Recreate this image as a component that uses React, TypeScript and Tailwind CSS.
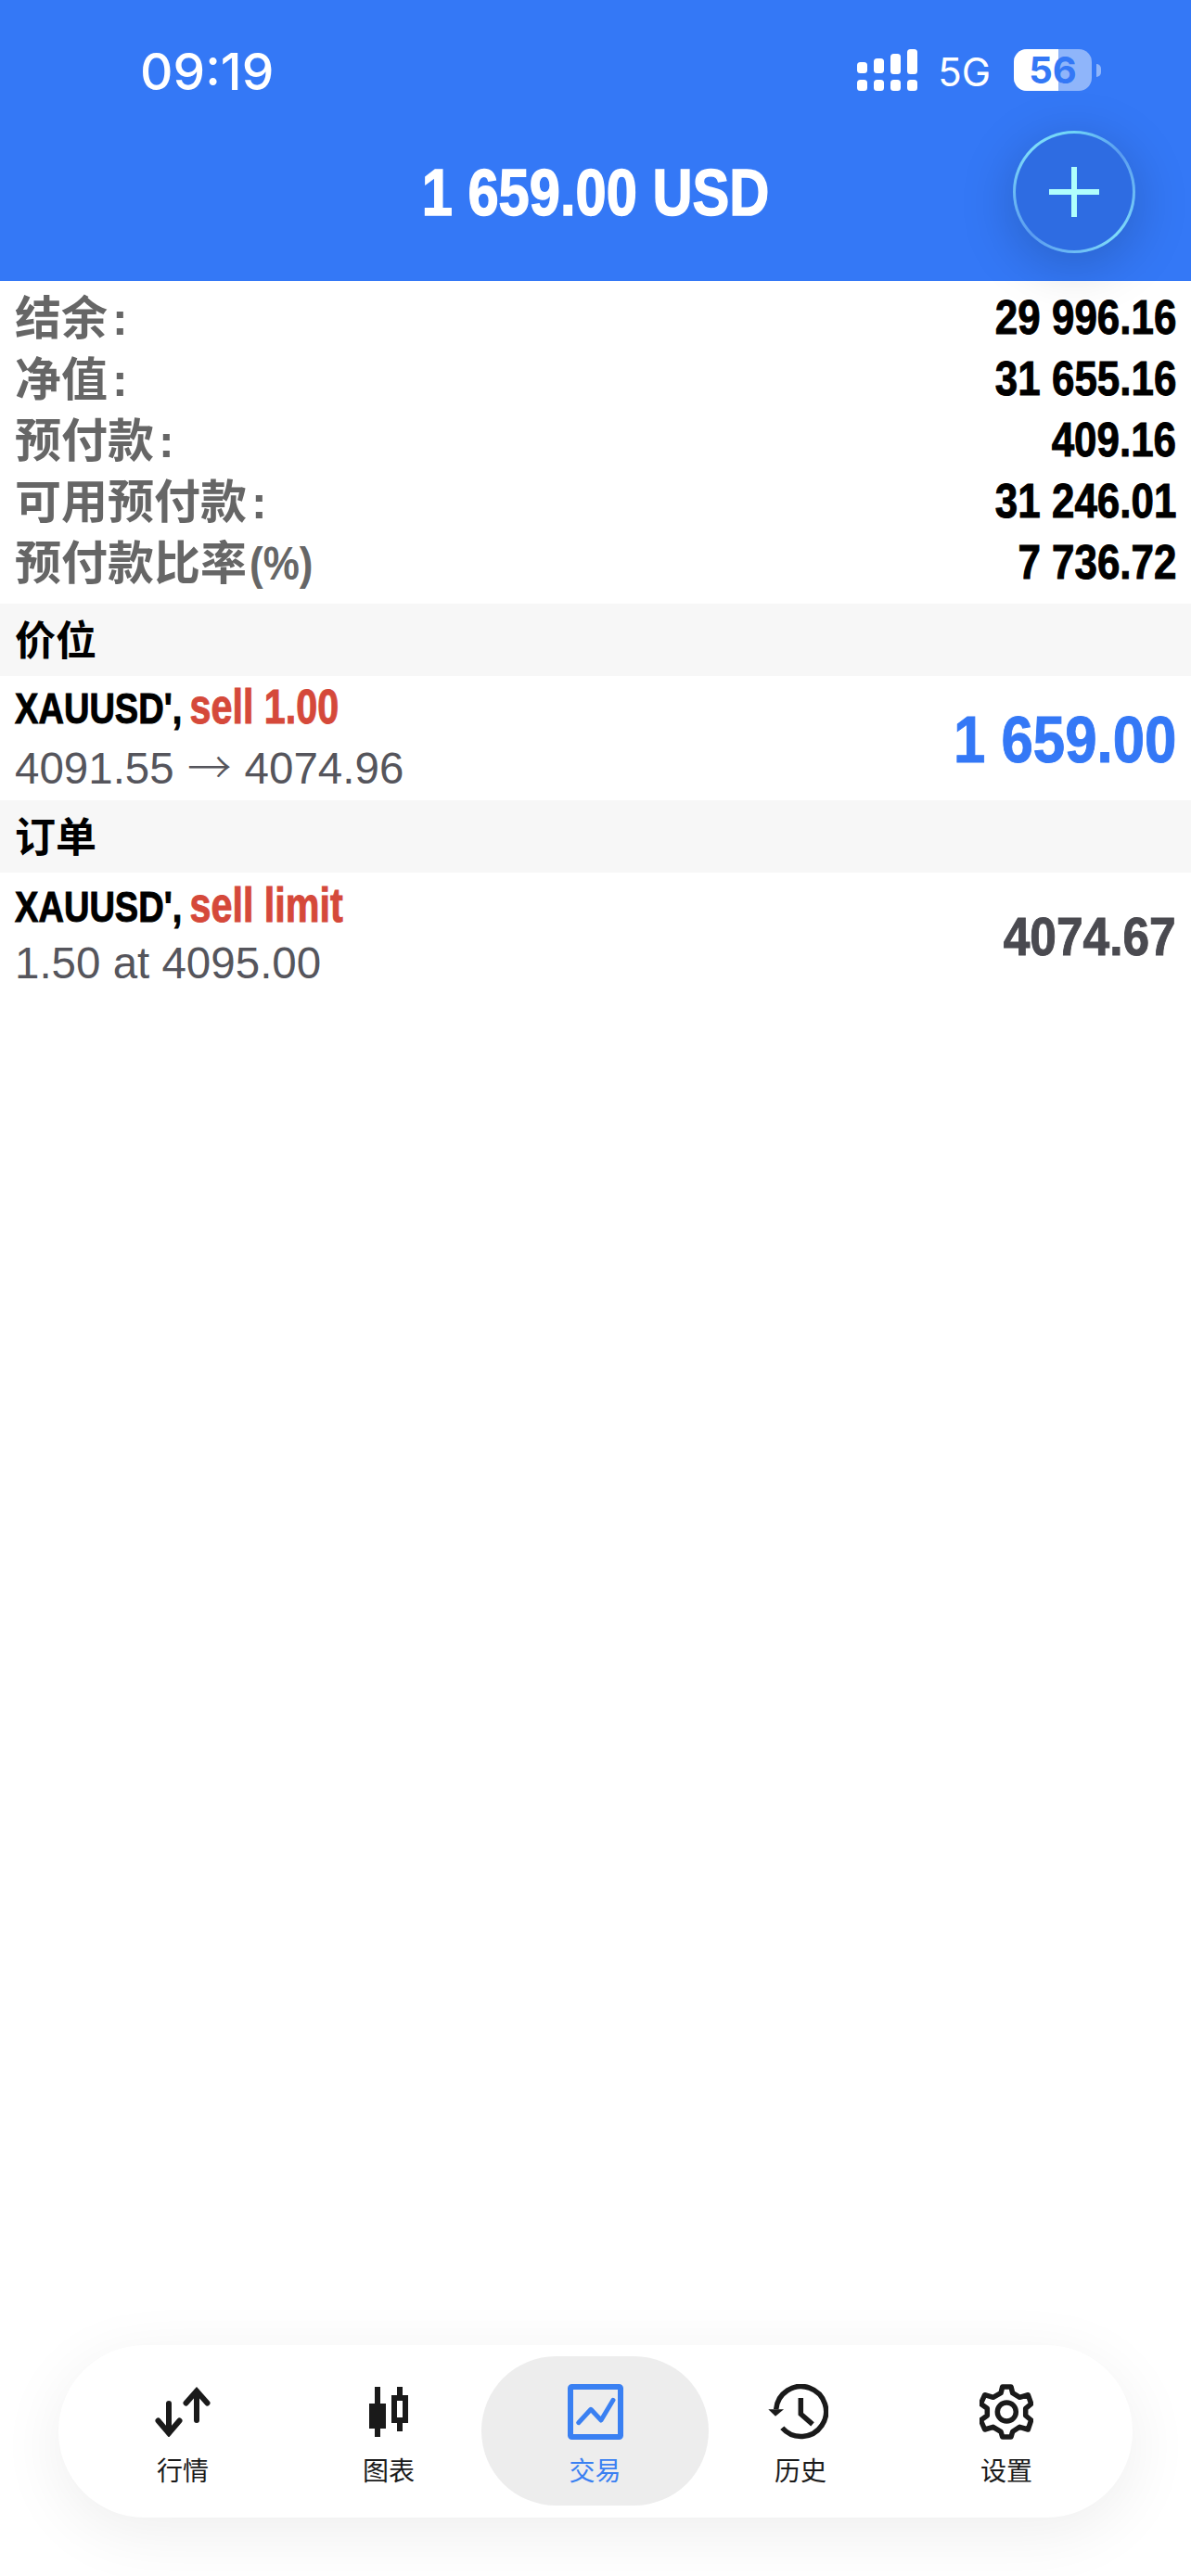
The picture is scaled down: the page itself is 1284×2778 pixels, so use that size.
const sans = 'font-["Liberation_Sans","Noto_Sans_CJK_SC",sans-serif]';
const inter = 'font-["Inter","Liberation_Sans",sans-serif]';
const heavy = '[-webkit-text-stroke:1px_currentColor]';

const summary = [
  { label: '结余', colon: true, value: '29 996.16' },
  { label: '净值', colon: true, value: '31 655.16' },
  { label: '预付款', colon: true, value: '409.16' },
  { label: '可用预付款', colon: true, value: '31 246.01' },
  { label: '预付款比率', colon: false, value: '7 736.72' },
];

function SignalIcon() {
  const cols = [
    { x: 0, y: 14, h: 12 },
    { x: 18, y: 10, h: 16 },
    { x: 36, y: 5, h: 22 },
    { x: 54, y: 0, h: 27 },
  ];
  return (
    <svg width="65" height="45" viewBox="0 0 65 45" fill="white">
      {cols.map((c) => (
        <g key={c.x}>
          <rect x={c.x} y={c.y} width="11" height={c.h} rx="3.5" />
          <rect x={c.x} y="33" width="11" height="12" rx="3.5" />
        </g>
      ))}
    </svg>
  );
}

function Battery() {
  return (
    <div className="flex items-center">
      <div className="relative h-[45px] w-[84px] rounded-[14px] bg-white/45">
        <div className="h-full w-[48px] rounded-l-[14px] bg-white" />
        <span className={`absolute inset-0 flex items-center justify-center text-[40px] leading-none font-bold text-[#3478f6] ${inter}`}>56</span>
      </div>
      <div className="ml-[5px] h-[14px] w-[5px] rounded-r-full bg-white/45" />
    </div>
  );
}

function SectionHeader({ title }: { title: string }) {
  return (
    <div className={`flex h-[78px] items-center bg-[#f7f7f7] pt-[3px] pl-4 text-[44px] leading-none font-bold text-black ${sans}`}>{title}</div>
  );
}

function TradeRow({ side, detail, value, valueClass, height }: { side: string; detail: React.ReactNode; value: string; valueClass: string; height: string }) {
  return (
    <div className={`flex items-center justify-between px-4 ${height}`}>
      <div className="-mt-[1px]">
        <p className={`origin-left scale-x-[.81] text-[47px] leading-[54px] font-bold whitespace-nowrap text-black ${heavy} ${sans}`}>
          XAUUSD',<span className="ml-[10px] text-[51px] text-[#d5493a]">{side}</span>
        </p>
        <p className={`mt-[7px] text-[47.5px] leading-[54px] whitespace-nowrap text-[#55555c] ${sans}`}>{detail}</p>
      </div>
      <span className={`origin-right pt-[3px] font-bold ${heavy} ${sans} ${valueClass}`}>{value}</span>
    </div>
  );
}

function MarketIcon() {
  return (
    <svg width="60" height="54" viewBox="0 0 60 54" fill="none" stroke="#1a1a1a" strokeWidth="6" strokeLinecap="round" strokeLinejoin="miter">
      <path d="M15 18V50M3.5 36.5L15 50L26.5 36.5" />
      <path d="M45 36V4.5M33.5 17.5L45 4.5L56.5 17.5" />
    </svg>
  );
}

function CandleIcon() {
  return (
    <svg width="42" height="54" viewBox="0 0 42 54" fill="#1a1a1a">
      <rect x="6" y="0" width="6" height="54" />
      <rect x="0" y="18" width="18" height="27" />
      <path fillRule="evenodd" d="M30 0h6v9h6v30h-6v9h-6v-9h-6V9h6zM30 15v18h6V15z" />
    </svg>
  );
}

function TradeIcon() {
  return (
    <svg width="60" height="60" viewBox="0 0 60 60" fill="none" stroke="#3a80f2">
      <rect x="3" y="3" width="54" height="54" rx="1.5" strokeWidth="6" />
      <path d="M11.7 41.7L25 27.3L36 39L49 17.3" strokeWidth="5" strokeLinecap="round" strokeLinejoin="round" />
    </svg>
  );
}

function HistoryIcon() {
  return (
    <svg className="-ml-[5px]" width="65" height="60" viewBox="0 0 65 60" fill="none" stroke="#1a1a1a" strokeWidth="5.5">
      <path d="M15.3 47.3A27 27 0 1 0 8.7 27.3" />
      <path d="M0.3 27.3H17L8 34.7Z" fill="#1a1a1a" stroke="none" />
      <path d="M35.3 15V32.3L48 43.3" />
    </svg>
  );
}

function GearIcon() {
  return (
    <svg width="58" height="60" viewBox="0 0 58 60" fill="none" stroke="#1a1a1a" strokeWidth="5.5" strokeLinejoin="round">
      <path d="M24.7 3H34L35.7 9.7L43.3 14.3L52.3 11.7L55.7 21.3L49.7 26.3V34L55.7 39L52.3 49L43.3 46.3L35.7 51.3L34 57H24.7L23 51.3L14.7 46.3L5.7 49L1.3 39L8.3 34V26.3L1.3 21.3L5.7 11.7L14.7 14.3L23 9.7Z" />
      <circle cx="29.3" cy="30" r="10" />
    </svg>
  );
}

const tabs = [
  { label: '行情', icon: <MarketIcon /> },
  { label: '图表', icon: <CandleIcon /> },
  { label: '交易', icon: <TradeIcon />, active: true },
  { label: '历史', icon: <HistoryIcon /> },
  { label: '设置', icon: <GearIcon /> },
];

export default function App() {
  return (
    <div className="relative flex h-[2778px] w-[1284px] flex-col bg-white">
      <header className="h-[303px] shrink-0 bg-[#3478f6] text-white">
        <div className="flex items-start justify-between pt-[53px] pr-[97px] pl-[151px]">
          <span className={`mt-[2px] text-[55px] leading-[45px] font-medium ${inter}`}>09:19</span>
          <div className="flex items-center">
            <SignalIcon />
            <span className={`mr-[25px] ml-[22px] translate-y-[2px] text-[42px] leading-none ${inter}`}>5G</span>
            <Battery />
          </div>
        </div>
        <h1 className={`mt-[67px] scale-x-[.84] text-center text-[71px] leading-[82px] font-bold [-webkit-text-stroke:1.5px_currentColor] ${sans}`}>1 659.00 USD</h1>
      </header>

      <button
        type="button"
        className="absolute top-[141px] left-[1092px] z-10 flex h-[132px] w-[132px] items-center justify-center rounded-full border-[3px] border-transparent [background:linear-gradient(#2e6ce2,#2e6ce2)_padding-box,conic-gradient(#6fd4f7_0deg,#5a9cf0_50deg,#7fdcf9_135deg,#5a9cf0_225deg,#7fdcf9_315deg,#6fd4f7_360deg)_border-box] shadow-[0_12px_60px_rgba(0,0,0,0.2)]"
      >
        <svg width="54" height="54" viewBox="0 0 54 54" fill="#b0fffc">
          <rect x="24" y="0" width="6" height="54" />
          <rect x="0" y="24" width="54" height="6" />
        </svg>
      </button>

      <main className="flex-1">
        <div className="flex flex-col pt-[6px] pb-[12px]">
          {summary.map((row) => (
            <div key={row.label} className="flex h-[66px] items-center justify-between px-4">
              <span className={`pt-[3px] whitespace-nowrap text-[50px] leading-none font-bold text-[#666666] ${sans}`}>
                {row.label}
                {row.colon ? <span className="ml-[5px]">:</span> : <span className="ml-[3px] inline-block origin-left scale-x-[.88]">(%)</span>}
              </span>
              <span className={`origin-right scale-x-[.845] text-[52px] leading-none font-bold text-black ${heavy} ${sans}`}>{row.value}</span>
            </div>
          ))}
        </div>
        <SectionHeader title="价位" />
        <TradeRow
          height="h-[134px]"
          side="sell 1.00"
          detail={
            <>
              4091.55 <span className='mx-[1px] font-["Noto_Sans_CJK_SC"] font-light'>→</span> 4074.96
            </>
          }
          value="1 659.00"
          valueClass="scale-x-[.87] text-[71px] leading-none text-[#3478f6]"
        />
        <SectionHeader title="订单" />
        <TradeRow height="h-[134px]" side="sell limit" detail="1.50 at 4095.00" value="4074.67" valueClass="scale-x-[.887] text-[58px] leading-none text-[#4a4a50]" />
      </main>

      <nav className="mx-[63px] mb-[63px] grid h-[186px] shrink-0 grid-cols-5 rounded-full bg-white pt-[12px] pr-[25px] pb-[13px] pl-[23px] shadow-[0_16px_70px_rgba(0,0,0,0.07)]">
        {tabs.map((tab) => (
          <div
            key={tab.label}
            className={`flex flex-col items-center rounded-full pt-[30px] ${tab.active ? '-mr-[12px] -ml-[11px] bg-[#ededed] text-[#3a80f2]' : 'text-[#1a1a1a]'}`}
          >
            <div className="flex h-[60px] items-center justify-center">{tab.icon}</div>
            <span className={`mt-[17px] text-[28px] leading-[36px] ${sans}`}>{tab.label}</span>
          </div>
        ))}
      </nav>
    </div>
  );
}
